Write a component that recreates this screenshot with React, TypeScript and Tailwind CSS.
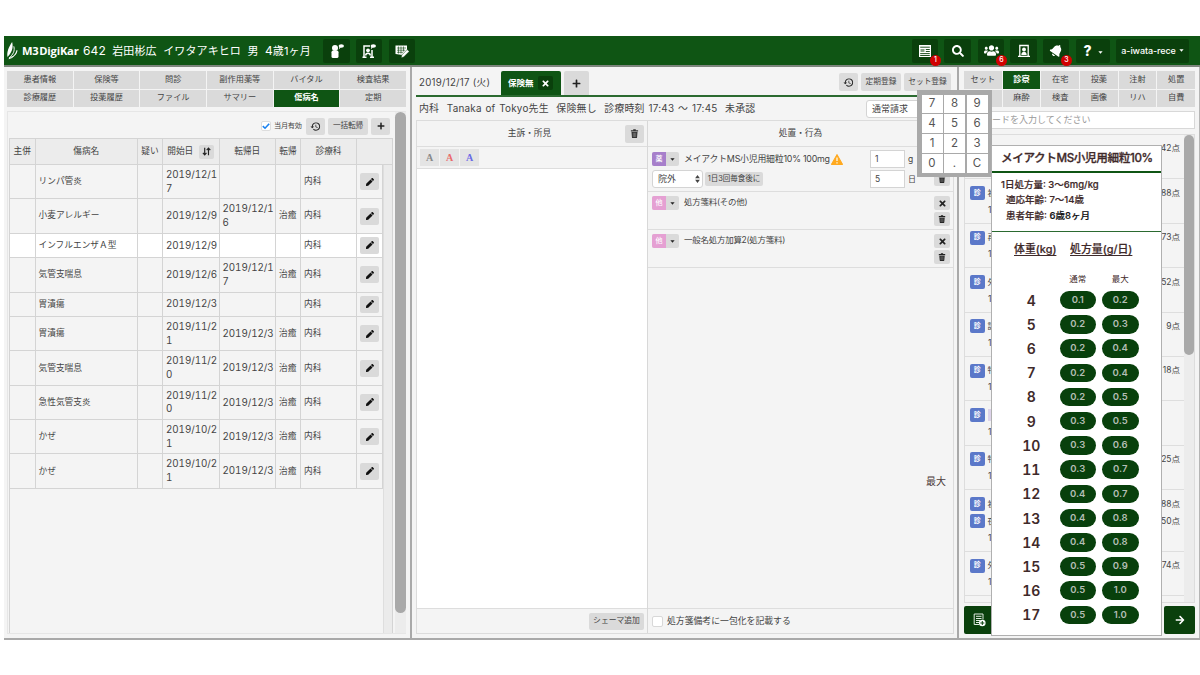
import React from "react";
import { FaPen, FaPlus, FaTimes, FaSearch, FaUsers, FaBell, FaArrowRight } from "react-icons/fa";
import { MdHistory } from "react-icons/md";

const LEFT_TABS = [
  "患者情報", "保険等", "問診", "副作用薬等", "バイタル", "検査結果",
  "診療履歴", "投薬履歴", "ファイル", "サマリー", "傷病名", "定期",
];

const RIGHT_TABS = [
  "セット", "診察", "在宅", "投薬", "注射", "処置",
  "", "麻酔", "検査", "画像", "リハ", "自費",
];

const DISEASES = [
  { name: "リンパ管炎", start: "2019/12/1\n7", end: "", result: "" },
  { name: "小麦アレルギー", start: "2019/12/9", end: "2019/12/1\n6", result: "治癒" },
  { name: "インフルエンザＡ型", start: "2019/12/9", end: "", result: "", active: true },
  { name: "気管支喘息", start: "2019/12/6", end: "2019/12/1\n7", result: "治癒" },
  { name: "胃潰瘍", start: "2019/12/3", end: "", result: "" },
  { name: "胃潰瘍", start: "2019/11/2\n1", end: "2019/12/3", result: "治癒" },
  { name: "気管支喘息", start: "2019/11/2\n0", end: "2019/12/3", result: "治癒" },
  { name: "急性気管支炎", start: "2019/11/2\n0", end: "2019/12/3", result: "治癒" },
  { name: "かぜ", start: "2019/10/2\n1", end: "2019/12/3", result: "治癒" },
  { name: "かぜ", start: "2019/10/2\n1", end: "2019/12/3", result: "治癒" },
];

const DOSES = [
  ["4", "0.1", "0.2"],
  ["5", "0.2", "0.3"],
  ["6", "0.2", "0.4"],
  ["7", "0.2", "0.4"],
  ["8", "0.2", "0.5"],
  ["9", "0.3", "0.5"],
  ["10", "0.3", "0.6"],
  ["11", "0.3", "0.7"],
  ["12", "0.4", "0.7"],
  ["13", "0.4", "0.8"],
  ["14", "0.4", "0.8"],
  ["15", "0.5", "0.9"],
  ["16", "0.5", "1.0"],
  ["17", "0.5", "1.0"],
];

const SET_ROWS = [
  [{ name: "", pt: "42点", noTag: true }],
  [{ name: "初", pt: "88点" }],
  [{ name: "再", pt: "73点" }],
  [{ name: "外", pt: "52点" }],
  [{ name: "認", pt: "9点" }],
  [{ name: "特", pt: "18点" }],
  [{ name: "", pt: "", mark: true }],
  [{ name: "特", pt: "25点" }],
  [{ name: "初", pt: "88点" }, { name: "夜", pt: "50点" }],
  [{ name: "外", pt: "74点" }],
] as { name: string; pt: string; mark?: boolean; noTag?: boolean }[][];

const COLS = "grid-cols-[25.5px_102.5px_25px_56.5px_56.5px_25px_56px_26px]";

const Trash = ({ className }: { className?: string }) => (
  <svg viewBox="0 0 12 12" className={className} fill="currentColor">
    <path d="M4.3.4h3.4v1.2h3.1v1.8H1.2V1.6h3.1z" />
    <path d="M2 4h8l-.6 7.2a.8.8 0 0 1-.8.7H3.4a.8.8 0 0 1-.8-.7z" />
    <path d="M4.4 5v5.7M6 5v5.7M7.6 5v5.7" stroke="#aaa" strokeWidth=".6" />
  </svg>
);

const Caret = ({ className }: { className?: string }) => (
  <svg viewBox="0 0 8 5" className={className} fill="currentColor">
    <path d="M.5.5h7L4 4.5z" />
  </svg>
);

const HeaderButton = ({
  className,
  badge,
  children,
}: {
  className: string;
  badge?: string;
  children: React.ReactNode;
}) => (
  <div className={`relative flex h-6 shrink-0 items-center justify-center rounded-[2px] bg-[#0a400c] text-white ${className}`}>
    {children}
    {badge && (
      <span className="absolute -bottom-[3px] -right-[3px] flex h-[11px] w-[11px] items-center justify-center rounded-full bg-[#d00000] text-[7px] font-medium">
        {badge}
      </span>
    )}
  </div>
);

const Header = () => (
  <header className="flex h-[31px] items-center border-b-2 border-[#7d857d] bg-[#0f5514] text-white shadow-[0_1px_0_#c4c4c4]">
    <svg viewBox="0 0 14 20" className="ml-[2px] h-[19px] w-[13px]" fill="none">
      <path d="M6.6.8C3 6 .7 11.200 1.600 17c4-4 6.800-9.500 5-16.200z" fill="#fff" />
      <path d="M8.400 5.500c1.500 5-1 9-4.900 12.300 4.500-1 7.700-4 8.200-7.800-.5 4-3.200 7.500-8.700 8.900" stroke="#fff" strokeWidth="1" />
    </svg>
    <div className="ml-[3px] w-[61px] whitespace-nowrap pt-px font-['Open_Sans','Noto_Sans_CJK_JP',sans-serif] text-[11.200px] font-bold tracking-[-0.200px] [word-spacing:-2px]">
      M3 DigiKar
    </div>
    <div className="w-[240px] whitespace-pre text-[11px] tracking-[0.120px]">
      <span className="text-[12px] tracking-[0.100px]">642</span>  岩田彬広  イワタアキヒロ  男  <span className="text-[12px]">4</span>歳1ヶ月
    </div>
    <HeaderButton className="w-[27px]">
      <svg viewBox="0 0 16 16" className="h-4 w-4" fill="currentColor">
        <circle cx="6" cy="5" r="3" />
        <rect x="2.500" y="7.600" width="7" height="7.400" rx="1.600" />
        <ellipse cx="12.300" cy="3" rx="2.700" ry="1.800" />
        <path d="M10.500 3.500h2L9.800 6.500z" />
      </svg>
    </HeaderButton>
    <HeaderButton className="ml-[6px] w-[26px]">
      <svg viewBox="0 0 16 16" className="h-4 w-4" fill="none" stroke="currentColor" strokeWidth="1.500">
        <path d="M9 3H3v11M11 7v7M1.500 14.200h4M9 14.200h4M4.700 12.500c0-3 4.600-3 4.600 0" />
        <circle cx="7" cy="7.300" r="1.900" fill="currentColor" stroke="none" />
        <ellipse cx="12.300" cy="3" rx="2.700" ry="1.800" fill="currentColor" stroke="none" />
        <path d="M10.500 3.500h2L9.800 6.500z" fill="currentColor" stroke="none" />
      </svg>
    </HeaderButton>
    <HeaderButton className="ml-[7px] w-[26px]">
      <svg viewBox="0 0 16 16" className="h-4 w-4" fill="currentColor">
        <path d="M1.500 2.500h11.500v5L8.500 12 1.500 11z" />
        <path d="M3 5h9M3 7.200h8M3 9.300h6M4.500 3.500v7M7 3.500v7M9.500 3.500v5" stroke="#0a400c" strokeWidth=".6" />
        <path d="M13.200 6.500l2 2-5.500 5.500-2.500.7.600-2.700z" stroke="#0a400c" strokeWidth=".5" />
      </svg>
    </HeaderButton>

    <div className="ml-auto flex pr-[11px]">
      <HeaderButton className="w-[26px]" badge="1">
        <svg viewBox="0 0 14 14" className="h-[14px] w-[14px]" fill="currentColor">
          <path d="M1 1h12v12H1z" />
          <path d="M2.200 3.200h9.600M7.800 5.500h4M7.800 7.500h4M2.200 9.600h9.600M2.200 11.500h9.600" stroke="#0a400c" strokeWidth=".9" />
          <path d="M2.500 5h4v3h-4z" fill="#0a400c" opacity=".5" />
        </svg>
      </HeaderButton>
      <HeaderButton className="ml-[6px] w-[27px]">
        <FaSearch className="h-[12px] w-[12px]" />
      </HeaderButton>
      <HeaderButton className="ml-[7px] w-[26px]" badge="6">
        <FaUsers className="h-[15px] w-[15px]" />
      </HeaderButton>
      <HeaderButton className="ml-[6px] w-[27px]">
        <svg viewBox="0 0 14 14" className="h-[14px] w-[14px]" fill="none" stroke="currentColor" strokeWidth="1.300">
          <path d="M2.800 12V1.500h8.400V12M1 12.300h12" />
          <circle cx="7" cy="5.500" r="1.900" fill="currentColor" stroke="none" />
          <path d="M4.300 11c0-4.200 5.400-4.200 5.400 0z" fill="currentColor" stroke="none" />
        </svg>
      </HeaderButton>
      <HeaderButton className="ml-[6px] w-[26px]" badge="3">
        <FaBell className="h-[13px] w-[13px] rotate-[35deg]" />
      </HeaderButton>
      <HeaderButton className="ml-[7px] w-[34px] gap-[6px]">
        <span className="text-[14px] font-extrabold">?</span>
        <Caret className="mt-[3px] h-[3px] w-[5px]" />
      </HeaderButton>
      <HeaderButton className="ml-[6px] w-[73px] gap-[3px]">
        <span className="text-[9px] font-medium tracking-[-0.100px]">a-iwata-rece</span>
        <Caret className="h-[3px] w-[5px]" />
      </HeaderButton>
    </div>
  </header>
);

const Tabs = ({ items, active }: { items: string[]; active: string }) => (
  <div className="grid grid-cols-6 gap-px">
    {items.map((t, i) => (
      <div
        key={i}
        className={`flex h-[17.500px] items-center justify-center pb-[1.500px] text-[8.200px] ${
          t === active ? "bg-[#0f5514] font-bold text-white" : "bg-[#dadada] text-[#444]"
        }`}
      >
        {t}
      </div>
    ))}
  </div>
);

const LeftPanel = () => (
  <section className="flex w-[406px] shrink-0 flex-col pb-[4px] pl-[3px] pr-[4px] pt-[4px]">
    <Tabs items={LEFT_TABS} active="傷病名" />
    <div className="mt-[4px] flex min-h-0 flex-1 border border-r-0 border-[#e6e6e6]">
      <div className="flex w-[385px] flex-col pl-px">
        <div className="flex h-[26px] shrink-0 items-center justify-end gap-[3px] pr-[3px] pt-[2px]">
          <div className="flex h-[10px] w-[10px] items-center justify-center rounded-[2px] border border-[#ddd] bg-white">
            <svg viewBox="0 0 10 10" className="h-2 w-2" fill="none" stroke="#1a82f0" strokeWidth="2">
              <path d="M1 5.200l2.800 2.600L9 2.200" />
            </svg>
          </div>
          <span className="w-[29px] whitespace-nowrap text-[7.200px] tracking-[-0.300px]">当月有効</span>
          <div className="flex h-[17px] w-[19px] items-center justify-center rounded-[2px] bg-[#dcdcdc]">
            <MdHistory className="h-[11px] w-[11px] text-[#222]" />
          </div>
          <div className="flex h-[17px] w-[40px] items-center justify-center rounded-[2px] bg-[#dcdcdc] text-[7.700px] tracking-[-0.200px]">
            一括転帰
          </div>
          <div className="flex h-[17px] w-[19px] items-center justify-center rounded-[2px] bg-[#dcdcdc] text-[#222]">
            <FaPlus className="h-[8px] w-[8px]" />
          </div>
        </div>
        <div className={`grid h-[27px] shrink-0 ${COLS} border border-[#d4d4d4] bg-[#ececec] text-[8.700px]`}>
          {["主併", "傷病名", "疑い", "開始日", "転帰日", "転帰", "診療科", ""].map((h, i) => (
            <div key={i} className={`flex items-center justify-center whitespace-nowrap ${i < 7 ? "border-r border-[#d4d4d4]" : ""}`}>
              {h}
              {h === "開始日" && (
                <span className="ml-[6px] flex h-[14px] w-[15px] items-center justify-center rounded-[2px] bg-[#dadada]">
                  <svg viewBox="0 0 10 10" className="h-[9px] w-[9px]" fill="none" stroke="#222" strokeWidth="1.300">
                    <path d="M3 .8v8M1 6.500l2 2.200 2-2.200M7.200 9.200v-8M5.200 3.500l2-2.200 2 2.200" />
                  </svg>
                </span>
              )}
            </div>
          ))}
        </div>
        <div className="flex min-h-0 flex-1 border-x border-[#d4d4d4]">
          <div className="w-[373px]">
            {DISEASES.map((d, i) => (
              <div
                key={i}
                className={`grid ${COLS} border-b border-[#d4d4d4] text-[8.700px] ${
                  (d.start + d.end).includes("\n") ? "h-[34.350px]" : "h-[24.500px]"
                } ${d.active ? "bg-white" : ""}`}
              >
                {["", d.name, "", d.start, d.end, d.result, "内科"].map((v, c) => (
                  <div
                    key={c}
                    className={`flex items-center whitespace-pre border-r border-[#d4d4d4] pl-[3px] ${
                      c === 3 || c === 4 ? "text-[9.800px] leading-[13.700px] tracking-[-0.050px] tabular-nums" : ""
                    }`}
                  >
                    {v}
                  </div>
                ))}
                <div className="flex items-center justify-center border-r border-[#d4d4d4]">
                  <div className="flex h-[17px] w-[19px] items-center justify-center rounded-[2px] bg-[#dadada]">
                    <FaPen className="h-[8px] w-[8px] text-[#111]" />
                  </div>
                </div>
              </div>
            ))}
          </div>
          <div className="flex-1 border-l border-[#dedede] bg-[#ebebeb]" />
        </div>
      </div>
      <div className="ml-auto w-[11px] bg-[#ececec]">
        <div className="h-[501px] rounded-full bg-[#a9a9a9]" />
      </div>
    </div>
  </section>
);

const Tag = ({ label, color }: { label: string; color: string }) => (
  <div className="flex h-[14px] w-[27px] shrink-0 overflow-hidden rounded-[2px] bg-[#dadada]">
    <span className={`flex w-[14px] items-center justify-center text-[7px] font-medium text-white ${color}`}>{label}</span>
    <span className="flex flex-1 items-center justify-center">
      <Caret className="h-[3px] w-[5px] text-[#222]" />
    </span>
  </div>
);

const SmallButton = ({ children }: { children: React.ReactNode }) => (
  <div className="flex h-[14px] w-[16px] items-center justify-center rounded-[2px] bg-[#dadada] text-[#222]">{children}</div>
);

const OrderRow = ({ name }: { name: string }) => (
  <div className="flex h-[38px] border-b border-[#ddd] pl-[4px] pr-[3px] pt-[4px]">
    <Tag label="他" color="bg-[#e5a0d3]" />
    <div className="ml-[5px] flex-1 text-[8.500px] leading-[12px] tracking-[-0.270px]">{name}</div>
    <div className="flex flex-col gap-[2px]">
      <SmallButton><FaTimes className="h-[9px] w-[9px]" /></SmallButton>
      <SmallButton><Trash className="h-[8px] w-[8px]" /></SmallButton>
    </div>
  </div>
);

const MiddlePanel = () => (
  <section className="flex w-[549px] shrink-0 flex-col border-x-2 border-[#a9a9a9] pb-[4px] pl-[4px] pr-[3px] pt-[4px]">
    <div className="flex h-[26px] shrink-0 items-end border-b-2 border-[#2b6a30]">
      <div className="w-[85px] whitespace-nowrap pl-[3px] text-[9.700px] leading-[24px] tracking-[0.250px]">2019/12/17 (火)</div>
      <div className="flex h-[24px] w-[60px] items-center justify-between rounded-t-[2px] bg-[#0f5514] pl-[7px] pr-[8px] text-[8.500px] font-bold text-white">
        保険無
        <span className="flex h-[14px] w-[15px] items-center justify-center rounded-[2px] bg-[#0a400c]">
          <FaTimes className="h-[9px] w-[9px]" />
        </span>
      </div>
      <div className="ml-[3px] flex h-[24px] w-[25px] items-center justify-center rounded-t-[2px] bg-[#dadada] text-[#222]">
        <FaPlus className="h-[9px] w-[9px]" />
      </div>
      <div className="mb-[4px] ml-auto mr-[3px] flex gap-[3px] text-[7.700px]">
        <div className="flex h-[18px] w-[19px] items-center justify-center rounded-[2px] bg-[#dcdcdc]">
          <MdHistory className="h-[11px] w-[11px] text-[#222]" />
        </div>
        <div className="flex h-[18px] w-[40px] items-center justify-center whitespace-nowrap rounded-[2px] bg-[#dcdcdc]">定期登録</div>
        <div className="flex h-[18px] w-[47px] items-center justify-center whitespace-nowrap rounded-[2px] bg-[#dcdcdc]">セット登録</div>
      </div>
    </div>
    <div className="flex h-[23px] shrink-0 items-center pl-[3px]">
      <span className="whitespace-pre text-[9.900px] tracking-[0.220px] [word-spacing:0.800px]">
        内科  Tanaka of Tokyo先生  保険無し  診療時刻 17:43 〜 17:45  未承認
      </span>
      <div className="ml-auto h-[18px] w-[88px] rounded-[3px] border border-[#d4d4d4] bg-white pl-[5px] text-[9px] leading-[16px]">通常請求</div>
    </div>

    <div className="flex min-h-0 flex-1 border border-[#dcdcdc]">
      <div className="flex w-[231px] flex-col border-r border-[#d8d8d8]">
        <div className="flex h-[26px] shrink-0 items-center border-b border-[#ddd] pl-[17px] pr-[3px] text-[8.700px]">
          <span className="flex-1 text-center">主訴・所見</span>
          <div className="flex h-[18px] w-[19px] items-center justify-center rounded-[2px] bg-[#dadada] text-[#333]">
            <Trash className="h-[9px] w-[9px]" />
          </div>
        </div>
        <div className="flex h-[22px] shrink-0 items-center gap-px border-b border-[#ddd] pl-[3px] font-['Liberation_Serif',serif] text-[10px] font-bold">
          <span className="flex h-[17px] w-[19px] items-center justify-center bg-[#e4e4e4] text-[#888]">A</span>
          <span className="flex h-[17px] w-[19px] items-center justify-center bg-[#e4e4e4] text-[#ea6a6a]">A</span>
          <span className="flex h-[17px] w-[19px] items-center justify-center bg-[#e4e4e4] text-[#6a6ae6]">A</span>
        </div>
        <div className="flex-1 bg-white" />
        <div className="flex h-[25px] shrink-0 items-center justify-end border-t border-[#ddd] pr-[3px]">
          <div className="flex h-[17px] w-[55px] items-center justify-center whitespace-nowrap rounded-[2px] bg-[#dadada] text-[7.800px]">シェーマ追加</div>
        </div>
      </div>

      <div className="flex flex-1 flex-col">
        <div className="flex h-[26px] shrink-0 items-center justify-center border-b border-[#ddd] text-[8.700px]">処置・行為</div>
        <div className="h-[45px] border-b border-[#ddd] pl-[4px] pr-[3px] pt-[2px]">
          <div className="flex h-[20px] items-center">
            <Tag label="薬" color="bg-[#a77fcb]" />
            <span className="ml-[5px] w-[147px] whitespace-nowrap text-[8.900px] tracking-[-0.220px]">メイアクトMS小児用細粒10% 100mg</span>
            <svg viewBox="0 0 12 11" className="h-[11px] w-[12px]">
              <path d="M6 .5l5.700 10H.3z" fill="#ffa91f" stroke="#ffa91f" strokeLinejoin="round" />
              <path d="M6 3.500v3.600M6 8.200v1.300" stroke="#fff" strokeWidth="1.200" />
            </svg>
            <div className="ml-[27px] h-[18px] w-[35px] border border-[#d4d4d4] bg-white pl-[4px] text-[8.500px] leading-[16px]">1</div>
            <span className="ml-[3px] text-[8.500px]">g</span>
          </div>
          <div className="flex h-[20px] items-center">
            <div className="flex h-[18px] w-[51px] items-center justify-between rounded-[3px] border border-[#d4d4d4] bg-white pl-[5px] pr-[2px] text-[9px]">
              院外
              <svg viewBox="0 0 6 10" className="h-[8px] w-[5px]" fill="#444">
                <path d="M0 4l3-4 3 4zM0 6l3 4 3-4z" />
              </svg>
            </div>
            <div className="ml-[2px] flex h-[14px] w-[58px] items-center justify-center whitespace-nowrap rounded-[2px] bg-[#dadada] text-[7.500px]">1日3回毎食後に</div>
            <div className="ml-[107px] h-[18px] w-[35px] border border-[#d4d4d4] bg-white pl-[4px] text-[8.500px] leading-[16px]">5</div>
            <span className="ml-[3px] text-[8px]">日</span>
            <div className="ml-auto">
              <SmallButton><Trash className="h-[8px] w-[8px]" /></SmallButton>
            </div>
          </div>
        </div>
        <OrderRow name="処方箋料(その他)" />
        <OrderRow name="一般名処方加算2(処方箋料)" />
        <div className="flex flex-1 items-end justify-end pb-[119px] pr-[7px] text-[10px] text-[#4a3838]">最大</div>
        <div className="flex h-[25px] shrink-0 items-center border-t border-[#ddd] pl-[4px]">
          <span className="h-[11px] w-[11px] rounded-[2px] border border-[#d8d8d8] bg-white" />
          <span className="ml-[4px] text-[8.850px]">処方箋備考に一包化を記載する</span>
        </div>
      </div>
    </div>
  </section>
);

const RightPanel = () => (
  <section className="flex flex-1 flex-col border-r border-[#b5b5b5] pb-[4px] pl-[5px] pr-[4px] pt-[4px]">
    <Tabs items={RIGHT_TABS} active="診察" />
    <div className="mt-[4px] h-[18px] whitespace-nowrap border border-[#d8d8d8] bg-white pl-[27px] text-[9px] leading-[16px] text-[#999]">
      ードを入力してください
    </div>
    <div className="mt-[5px] flex h-[469px] overflow-hidden border border-[#ddd]">
      <div className="flex-1">
        {SET_ROWS.map((entries, i) => (
          <div key={i} className={`border-b border-[#dedede] pt-[5px] ${entries.length > 1 ? "h-[61.700px]" : "h-[44.400px]"}`}>
            {entries.map((e, j) => (
              <div key={j} className="flex h-[17.500px] items-center pl-[5px] pr-[4px] text-[8.500px]">
                {!e.noTag && (
                  <span className="flex h-[14px] w-[14.500px] shrink-0 items-center justify-center rounded-[2px] bg-[#5b78c9] text-[7px] font-bold text-white">
                    診
                  </span>
                )}
                <span className={`ml-[3px] ${e.mark ? "h-[12px] w-[12px] bg-[#ddd3ea]" : ""}`}>{e.name}</span>
                <span className="ml-auto">{e.pt}</span>
              </div>
            ))}
            {i > 0 && <div className="pl-[23px] text-[8.500px] leading-[17px]">1</div>}
          </div>
        ))}
      </div>
      <div className="w-[10px] bg-[#ececec]">
        <div className="h-[220px] rounded-full bg-[#a9a9a9]" />
      </div>
    </div>
    <div className="mt-auto flex h-[28px] justify-between">
      <div className="flex w-[40px] items-center rounded-[2px] bg-[#0a400c] pl-[9px]">
        <svg viewBox="0 0 13 14" className="h-[14px] w-[13px]" fill="none" stroke="#dfe8df" strokeWidth="1">
          <path d="M10 6.500V1H1.200v10.500H6M3 3.300h5.500M3 5.500h5.500M3 7.500h4M3 9.500h3" />
          <circle cx="9.300" cy="10" r="3.300" fill="#fff" stroke="none" />
          <path d="M9.300 8v4M7.300 10h4" stroke="#0a400c" />
        </svg>
      </div>
      <div className="flex w-[31px] items-center justify-center rounded-[2px] bg-[#0a400c] text-white">
        <FaArrowRight className="h-[10px] w-[10px]" />
      </div>
    </div>
  </section>
);

const Keypad = () => (
  <div className="absolute left-[917px] top-[90px] grid h-[87px] w-[75px] grid-cols-3 gap-[1.500px] bg-[#a9a9a9] p-[4.500px]">
    {["7", "8", "9", "4", "5", "6", "1", "2", "3", "0", ".", "C"].map((k) => (
      <div key={k} className="flex items-center justify-center bg-white text-[11.500px] text-[#555]">
        {k}
      </div>
    ))}
  </div>
);

const DosePopup = () => (
  <div className="absolute left-[991px] top-[145px] h-[491px] w-[171px] border border-[#b0b0b0] bg-white text-[#3f2a2a]">
    <div className="h-[27px] whitespace-nowrap border-b-2 border-[#0f5514] pl-[9px] text-[11.600px] font-medium leading-[25px] tracking-[-0.370px] [-webkit-text-stroke:0.300px]">
      メイアクトMS小児用細粒10%
    </div>
    <div className="h-[59px] border-b border-[#2b6a30] pl-[9px] pt-[4px] text-[9.500px] font-medium leading-[15.300px] [-webkit-text-stroke:0.200px]">
      <p>1日処方量: 3〜6mg/kg</p>
      <p className="pl-[5px]">適応年齢: 7〜14歳</p>
      <p className="pl-[5px]">患者年齢: <span className="text-[#111]">6歳8ヶ月</span></p>
    </div>
    <div className="flex gap-[13px] whitespace-nowrap pl-[22px] pt-[8px] text-[10.900px] font-medium leading-[18px] underline underline-offset-2 [-webkit-text-stroke:0.200px]">
      <span className="w-[43px]">体重(kg)</span>
      <span>処方量(g/日)</span>
    </div>
    <div className="grid h-[30px] grid-cols-[36.500px_36.500px] gap-[6px] pl-[67.500px] pt-[15px] text-center text-[8.500px] leading-[13px]">
      <span>通常</span>
      <span>最大</span>
    </div>
    {DOSES.map(([kg, normal, max]) => (
      <div key={kg} className="grid h-[24.230px] grid-cols-[50.500px_36.500px_36.500px] items-center gap-[6px] pl-[11px] text-center">
        <span className="pl-[6px] text-[14px] font-semibold tabular-nums">{kg}</span>
        <span className="h-[18.500px] rounded-full bg-[#08400c] text-[9.500px] font-semibold leading-[18.500px] text-[#b4beb4]">{normal}</span>
        <span className="h-[18.500px] rounded-full bg-[#08400c] text-[9.500px] font-semibold leading-[18.500px] text-[#b4beb4]">{max}</span>
      </div>
    ))}
  </div>
);

export default function App() {
  return (
    <div className="relative h-[675px] w-[1200px] overflow-hidden bg-white pl-[4px] pt-[36px] font-['Inter','Noto_Sans_CJK_JP',sans-serif] text-[#444]">
      <Header />
      <main className="flex h-[573px] border-b-2 border-[#a9a9a9] bg-[#f4f4f4]">
        <LeftPanel />
        <MiddlePanel />
        <RightPanel />
      </main>
      <Keypad />
      <DosePopup />
    </div>
  );
}
